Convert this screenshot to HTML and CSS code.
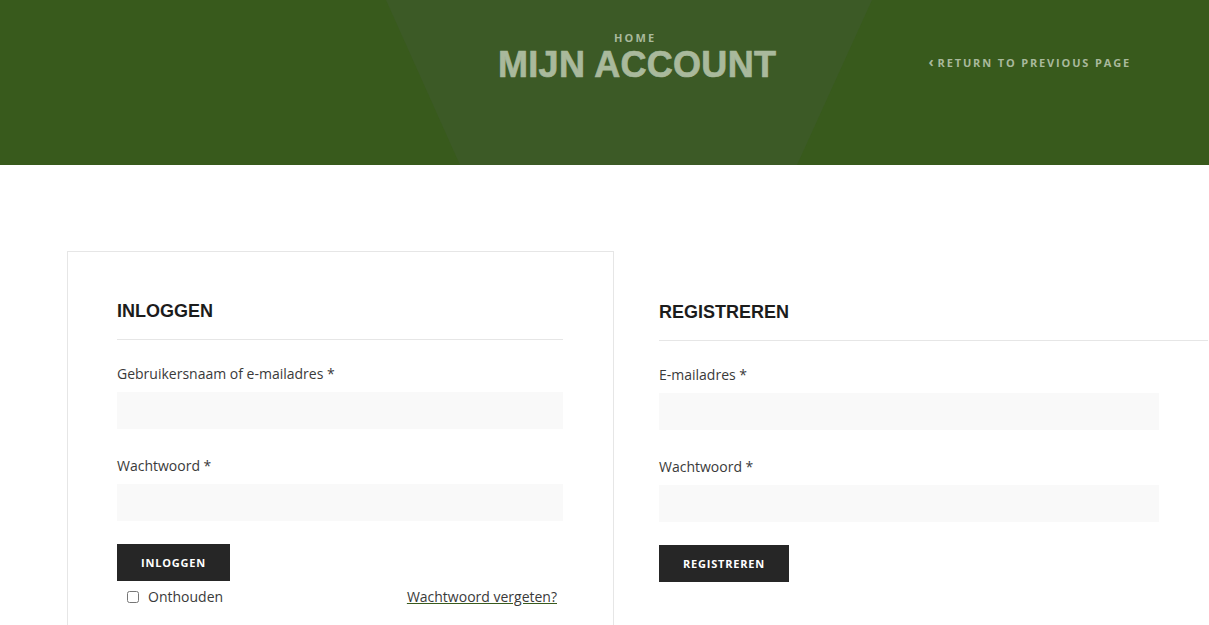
FILE: index.html
```html
<!DOCTYPE html>
<html lang="nl">
<head>
<meta charset="utf-8">
<title>Mijn account</title>
<link rel="stylesheet" href="styles.css">
</head>
<body>
<header class="hero">
  <div class="hero-title">
    <a class="crumb" href="#">Home</a>
    <h1 class="page-title">Mijn account</h1>
  </div>
  <a class="return-link" href="#"><span class="chev">&lsaquo;</span>Return to previous page</a>
</header>

<main class="account">
  <section class="panel panel-login">
    <h2 class="panel-heading">Inloggen</h2>
    <form class="form">
      <div class="field">
        <label class="field-label">Gebruikersnaam of e-mailadres *</label>
        <input class="field-input" type="text">
      </div>
      <div class="field">
        <label class="field-label">Wachtwoord *</label>
        <input class="field-input" type="password">
      </div>
      <button class="btn" type="button">Inloggen</button>
      <div class="form-extra">
        <label class="remember"><input class="check" type="checkbox">Onthouden</label>
        <a class="lost" href="#">Wachtwoord vergeten?</a>
      </div>
    </form>
  </section>

  <section class="panel panel-register">
    <h2 class="panel-heading">Registreren</h2>
    <form class="form form-narrow">
      <div class="field">
        <label class="field-label">E-mailadres *</label>
        <input class="field-input" type="email">
      </div>
      <div class="field">
        <label class="field-label">Wachtwoord *</label>
        <input class="field-input" type="password">
      </div>
      <button class="btn" type="button">Registreren</button>
    </form>
  </section>
</main>
</body>
</html>
```

FILE: styles.css
```css
* { box-sizing: border-box; }

html, body {
  margin: 0;
  padding: 0;
  background: #fff;
  font-family: "Open Sans", "Liberation Sans", sans-serif;
  color: #333;
  overflow: hidden;
}

/* ---------- hero ---------- */
.hero {
  position: relative;
  height: 165px;
  background: #385a1c;
  display: flex;
  align-items: flex-start;
  padding: 31px 78px 0 498px;
}
.hero::before {
  content: "";
  position: absolute;
  inset: 0;
  background: #3c5a26;
  clip-path: polygon(386px 0, 872px 0, 797px 165px, 460px 165px);
}
.hero-title {
  position: relative;
  display: flex;
  flex-direction: column;
  align-items: center;
}
.crumb {
  font-size: 11px;
  line-height: 13px;
  font-weight: 700;
  letter-spacing: 2.1px;
  text-transform: uppercase;
  color: #a9b99c;
  text-decoration: none;
  margin-right: 4px;
}
.page-title {
  margin: 1px 0 0;
  font-family: "Liberation Sans", Arial, sans-serif;
  font-size: 36px;
  line-height: 40px;
  font-weight: 700;
  letter-spacing: 0.3px;
  -webkit-text-stroke: 0.7px #a9b99c;
  text-transform: uppercase;
  color: #a9b99c;
  white-space: nowrap;
}
.return-link {
  position: relative;
  margin-left: auto;
  margin-top: 24px;
  font-size: 11px;
  line-height: 13px;
  font-weight: 700;
  letter-spacing: 1.85px;
  text-transform: uppercase;
  color: #a9b99c;
  text-decoration: none;
  white-space: nowrap;
}
.chev {
  font-size: 14px;
  letter-spacing: 0;
  margin-right: 4px;
}

/* ---------- account ---------- */
.account {
  display: grid;
  grid-template-columns: 547px 594px;
  align-items: start;
  padding: 86px 0 0 67px;
}
.panel-login {
  border: 1px solid #e6e6e6;
  padding: 48px 50px 40px 49px;
}
.panel-register {
  padding: 50px 0 0 45px;
}
.panel-heading {
  margin: 0 0 24px;
  font-family: "Liberation Sans", Arial, sans-serif;
  font-size: 18px;
  line-height: 22px;
  font-weight: 700;
  text-transform: uppercase;
  color: #1c1c1c;
  padding-bottom: 17px;
  border-bottom: 1px solid #e6e6e6;
}
.form {
  display: flex;
  flex-direction: column;
  align-items: flex-start;
}
.form-narrow { width: 500px; }
.field {
  display: flex;
  flex-direction: column;
  width: 100%;
  margin-bottom: 27px;
}
.field + .field { margin-bottom: 23px; }
.field-label {
  font-size: 14px;
  line-height: 20px;
  color: #3a3a3a;
  margin-bottom: 8px;
}
.field-input {
  width: 100%;
  height: 37px;
  border: 0;
  background: #f9f9f9;
  outline: none;
  font: inherit;
}
.btn {
  height: 37px;
  padding: 0 24px;
  border: 0;
  background: #262626;
  color: #fff;
  font-family: "Open Sans", sans-serif;
  font-size: 11px;
  font-weight: 700;
  letter-spacing: 0.8px;
  text-transform: uppercase;
  cursor: pointer;
}
.form-extra {
  display: flex;
  justify-content: space-between;
  align-items: center;
  width: 100%;
  margin-top: 3px;
  padding: 0 6px 0 10px;
  font-size: 14px;
  line-height: 26px;
  color: #3a3a3a;
}
.remember {
  display: flex;
  align-items: center;
  gap: 9px;
}
.check {
  margin: 0;
  width: 12px;
  height: 12px;
}
.lost {
  color: #3a3a3a;
  text-decoration: underline;
  text-decoration-color: #385a1c;
}
```
